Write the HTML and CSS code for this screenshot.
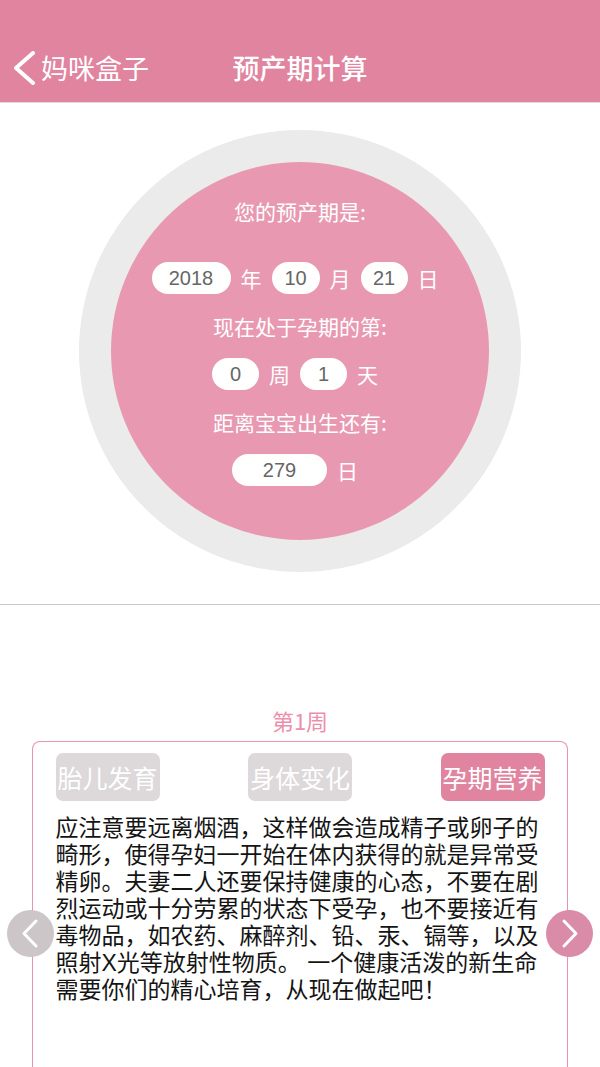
FILE: index.html
```html
<!DOCTYPE html>
<html lang="zh-CN">
<head>
<meta charset="utf-8">
<title>预产期计算</title>
<link rel="stylesheet" href="styles.css">
</head>
<body>
<div class="page">
  <header class="nav">
    <div class="back">
      <svg class="back-icon" width="24" height="34" viewBox="0 0 24 34"><polyline points="21,2 4,17 21,32" fill="none" stroke="#fff" stroke-width="4" stroke-linecap="round" stroke-linejoin="round"/></svg>
      <span class="back-text">妈咪盒子</span>
    </div>
    <div class="title">预产期计算</div>
    <div class="nav-end"></div>
  </header>

  <section class="calc">
    <div class="ring">
      <div class="disc">
        <div class="label label-first">您的预产期是:</div>
        <div class="row">
          <span class="pill pill-year">2018</span><span class="unit">年</span>
          <span class="pill">10</span><span class="unit">月</span>
          <span class="pill pill-narrow">21</span><span class="unit">日</span>
        </div>
        <div class="label">现在处于孕期的第:</div>
        <div class="row">
          <span class="pill pill-narrow">0</span><span class="unit">周</span>
          <span class="pill pill-narrow">1</span><span class="unit">天</span>
        </div>
        <div class="label">距离宝宝出生还有:</div>
        <div class="row">
          <span class="pill pill-wide">279</span><span class="unit">日</span>
        </div>
      </div>
    </div>
  </section>

  <hr class="sep">

  <div class="week">第1周</div>

  <div class="card">
    <div class="tabs">
      <div class="tab">胎儿发育</div>
      <div class="tab">身体变化</div>
      <div class="tab tab-active">孕期营养</div>
    </div>
    <p class="content">应注意要远离烟酒，这样做会造成精子或卵子的畸形，使得孕妇一开始在体内获得的就是异常受精卵。夫妻二人还要保持健康的心态，不要在剧烈运动或十分劳累的状态下受孕，也不要接近有毒物品，如农药、麻醉剂、铅、汞、镉等，以及照射X光等放射性物质。 一个健康活泼的新生命需要你们的精心培育，从现在做起吧！</p>
    <div class="arrow arrow-prev">
      <svg width="47" height="47" viewBox="0 0 47 47"><polyline points="29,11 17,23.5 29,36" fill="none" stroke="#fff" stroke-width="3" stroke-linecap="round" stroke-linejoin="round"/></svg>
    </div>
    <div class="arrow arrow-next">
      <svg width="47" height="47" viewBox="0 0 47 47"><polyline points="18,11 30,23.5 18,36" fill="none" stroke="#fff" stroke-width="3" stroke-linecap="round" stroke-linejoin="round"/></svg>
    </div>
  </div>
</div>
</body>
</html>
```

FILE: styles.css
```css
html, body {
  margin: 0;
  padding: 0;
  overflow: hidden;
  background: #fff;
}

body {
  font-family: "Noto Sans CJK SC", sans-serif;
  color: #111;
}

.page {
  width: 600px;
  height: 1067px;
  overflow: hidden;
}

/* header */
.nav {
  box-sizing: border-box;
  height: 103px;
  padding: 36px 0 2px;
  background: #e084a0;
  border-bottom: 1px solid #dcdcdc;
  display: grid;
  grid-template-columns: 1fr auto 1fr;
  align-items: center;
  color: #fff;
}

.back {
  display: flex;
  align-items: center;
  padding-left: 12px;
}

.back-icon {
  display: block;
  margin-right: 5px;
}

.back-text {
  font-size: 27px;
  line-height: 34px;
}

.title {
  font-size: 27px;
  line-height: 34px;
  font-weight: 500;
}

/* calculator */
.calc {
  display: flex;
  justify-content: center;
  padding-top: 27px;
}

.ring {
  width: 442px;
  height: 442px;
  border-radius: 50%;
  background: #ebebeb;
  display: flex;
  align-items: center;
  justify-content: center;
}

.disc {
  box-sizing: border-box;
  width: 378px;
  height: 378px;
  border-radius: 50%;
  background: #e899b1;
  padding-top: 33px;
  display: flex;
  flex-direction: column;
  align-items: center;
  gap: 16px;
  color: #fff;
}

.label {
  font-size: 21px;
  line-height: 32px;
  height: 32px;
}

.label-first {
  margin-bottom: 19px;
}

.row {
  display: flex;
  align-items: center;
  height: 32px;
}

.pill {
  width: 48px;
  height: 32px;
  border-radius: 16px;
  background: #fff;
  color: #666;
  font-family: "Liberation Sans", "Noto Sans CJK SC", sans-serif;
  font-size: 20px;
  line-height: 32px;
  text-align: center;
}

.pill-year { width: 79px; }
.pill-narrow { width: 47px; }
.pill-wide { width: 95px; }

.unit {
  width: 41px;
  text-align: center;
  font-size: 21px;
  line-height: 32px;
}

/* separator */
.sep {
  margin: 32px 0 0;
  border: none;
  height: 1px;
  background: #c8c8c8;
}

.week {
  margin-top: 100px;
  text-align: center;
  font-size: 22px;
  line-height: 30px;
  color: #ec8fae;
}

/* card */
.card {
  position: relative;
  box-sizing: border-box;
  margin: 6px 32px 0;
  height: 360px;
  border: 1.5px solid #ea93b0;
  border-bottom: none;
  border-radius: 8px 8px 0 0;
  padding: 10.5px 22.5px 0;
}

.tabs {
  display: flex;
  justify-content: space-between;
}

.tab {
  width: 104px;
  height: 48px;
  border-radius: 7px;
  background: #ddd8d9;
  color: #fff;
  font-size: 25px;
  line-height: 48px;
  text-align: center;
}

.tab-active {
  background: #e0849f;
}

.content {
  margin: 14.5px 0 0;
  font-family: "Liberation Sans", "Noto Sans CJK SC", sans-serif;
  font-size: 23px;
  line-height: 27px;
  color: #141414;
}

.arrow {
  position: absolute;
  top: 168px;
  width: 47px;
  height: 47px;
  border-radius: 50%;
}

.arrow svg {
  display: block;
}

.arrow-prev {
  left: -26px;
  background: #ccc6c8;
}

.arrow-next {
  right: -26px;
  background: #d98ba7;
}
```
